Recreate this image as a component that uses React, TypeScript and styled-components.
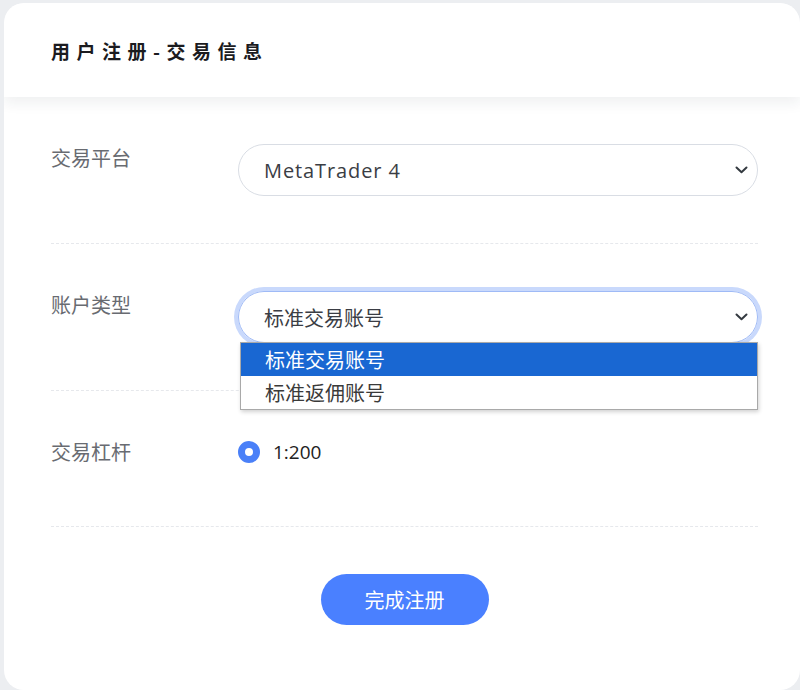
import { useState } from 'react';
import styled, { createGlobalStyle } from 'styled-components';

const GlobalStyle = createGlobalStyle`
  html, body {
    margin: 0;
    padding: 0;
    background: #eceef1;
    font-family: "Open Sans", "Noto Sans CJK SC", sans-serif;
  }
`;

const Page = styled.div`
  padding: 3px 0 0 4px;
  overflow: hidden;
  height: 690px;
  box-sizing: border-box;
`;

const Card = styled.div`
  width: 796px;
  min-height: 687px;
  background: #fff;
  border-radius: 20px;
  overflow: hidden;
`;

const Header = styled.div`
  height: 94px;
  display: flex;
  align-items: center;
  padding-left: 47px;
  background: #fff;
  border-radius: 20px 20px 0 0;
  box-shadow: 0 6px 14px rgba(30, 40, 60, 0.07);
  position: relative;
`;

const Title = styled.h1`
  margin: 0;
  font-family: "Noto Sans CJK SC", sans-serif;
  font-size: 19px;
  font-weight: 700;
  letter-spacing: 6.5px;
  color: #1b1b1f;
`;

const Form = styled.div`
  padding: 0 42px 0 47px;
`;

const Row = styled.div`
  display: flex;
  align-items: flex-start;
  padding: 47px 0;
  border-bottom: 1px dashed #e6e8ec;
`;

const Label = styled.div`
  width: 187px;
  flex-shrink: 0;
  padding-top: 1px;
  font-family: "Noto Sans CJK SC", sans-serif;
  font-size: 20px;
  line-height: 26px;
  color: #686b71;
`;

const Field = styled.div`
  flex: 1;
  position: relative;
`;

const SelectBox = styled.div<{ $focused?: boolean }>`
  height: 52px;
  box-sizing: border-box;
  border: 1px solid ${(p) => (p.$focused ? '#9fbaf6' : '#d9dde4')};
  border-radius: 26px;
  box-shadow: ${(p) => (p.$focused ? '0 0 0 4px #c9d9fc' : 'none')};
  display: flex;
  align-items: center;
  justify-content: space-between;
  padding: 0 9px 0 25px;
  color: #3a3d44;
`;

const Value = styled.span<{ $cjk?: boolean }>`
  font-family: ${(p) => (p.$cjk ? '"Noto Sans CJK SC", sans-serif' : '"Open Sans", sans-serif')};
  font-size: 20px;
  letter-spacing: ${(p) => (p.$cjk ? '0' : '0.9px')};
`;

const Options = styled.ul`
  position: absolute;
  top: 51px;
  left: 2px;
  right: 0;
  margin: 0;
  padding: 0;
  list-style: none;
  background: #fff;
  border: 1px solid #a9a9a9;
  box-shadow: 1px 2px 4px rgba(0, 0, 0, 0.18);
  z-index: 5;
`;

const Option = styled.li<{ $active?: boolean }>`
  height: 33px;
  display: flex;
  align-items: center;
  padding-left: 24px;
  font-family: "Noto Sans CJK SC", sans-serif;
  font-size: 20px;
  color: ${(p) => (p.$active ? '#fff' : '#3a3a3a')};
  background: ${(p) => (p.$active ? '#1967d2' : '#fff')};
`;

const RadioGroup = styled.div`
  min-height: 41px;
`;

const RadioLine = styled.label`
  display: flex;
  align-items: center;
  gap: 13px;
  height: 28px;
  font-family: "Open Sans", sans-serif;
  font-size: 19px;
  color: #222;
`;

const RadioDot = styled.span`
  width: 22px;
  height: 22px;
  box-sizing: border-box;
  border-radius: 50%;
  border: 7px solid #4a80f8;
  background: #fff;
`;

const Footer = styled.div`
  display: flex;
  justify-content: center;
  padding: 47px 0 0;
`;

const Submit = styled.button`
  width: 168px;
  height: 51px;
  border: none;
  border-radius: 26px;
  background: #4a80ff;
  color: #fff;
  font-family: "Noto Sans CJK SC", sans-serif;
  font-size: 20px;
  cursor: pointer;
`;

const Chevron = () => (
  <svg width="13" height="8" viewBox="0 0 13 8" fill="none">
    <path d="M1.5 1.5 L6.5 6.2 L11.5 1.5" stroke="#343a40" strokeWidth="2" strokeLinecap="round" strokeLinejoin="round" />
  </svg>
);

const accountTypes = ['标准交易账号', '标准返佣账号'];

export default function App() {
  const [account] = useState(accountTypes[0]);

  return (
    <>
      <GlobalStyle />
      <Page>
        <Card>
          <Header>
            <Title>用户注册-交易信息</Title>
          </Header>
          <Form>
            <Row>
              <Label>交易平台</Label>
              <Field>
                <SelectBox>
                  <Value>MetaTrader 4</Value>
                  <Chevron />
                </SelectBox>
              </Field>
            </Row>
            <Row>
              <Label>账户类型</Label>
              <Field>
                <SelectBox $focused>
                  <Value $cjk>{account}</Value>
                  <Chevron />
                </SelectBox>
                <Options>
                  {accountTypes.map((t) => (
                    <Option key={t} $active={t === account}>
                      {t}
                    </Option>
                  ))}
                </Options>
              </Field>
            </Row>
            <Row>
              <Label>交易杠杆</Label>
              <Field>
                <RadioGroup>
                  <RadioLine>
                    <RadioDot />
                    1:200
                  </RadioLine>
                </RadioGroup>
              </Field>
            </Row>
            <Footer>
              <Submit>完成注册</Submit>
            </Footer>
          </Form>
        </Card>
      </Page>
    </>
  );
}
